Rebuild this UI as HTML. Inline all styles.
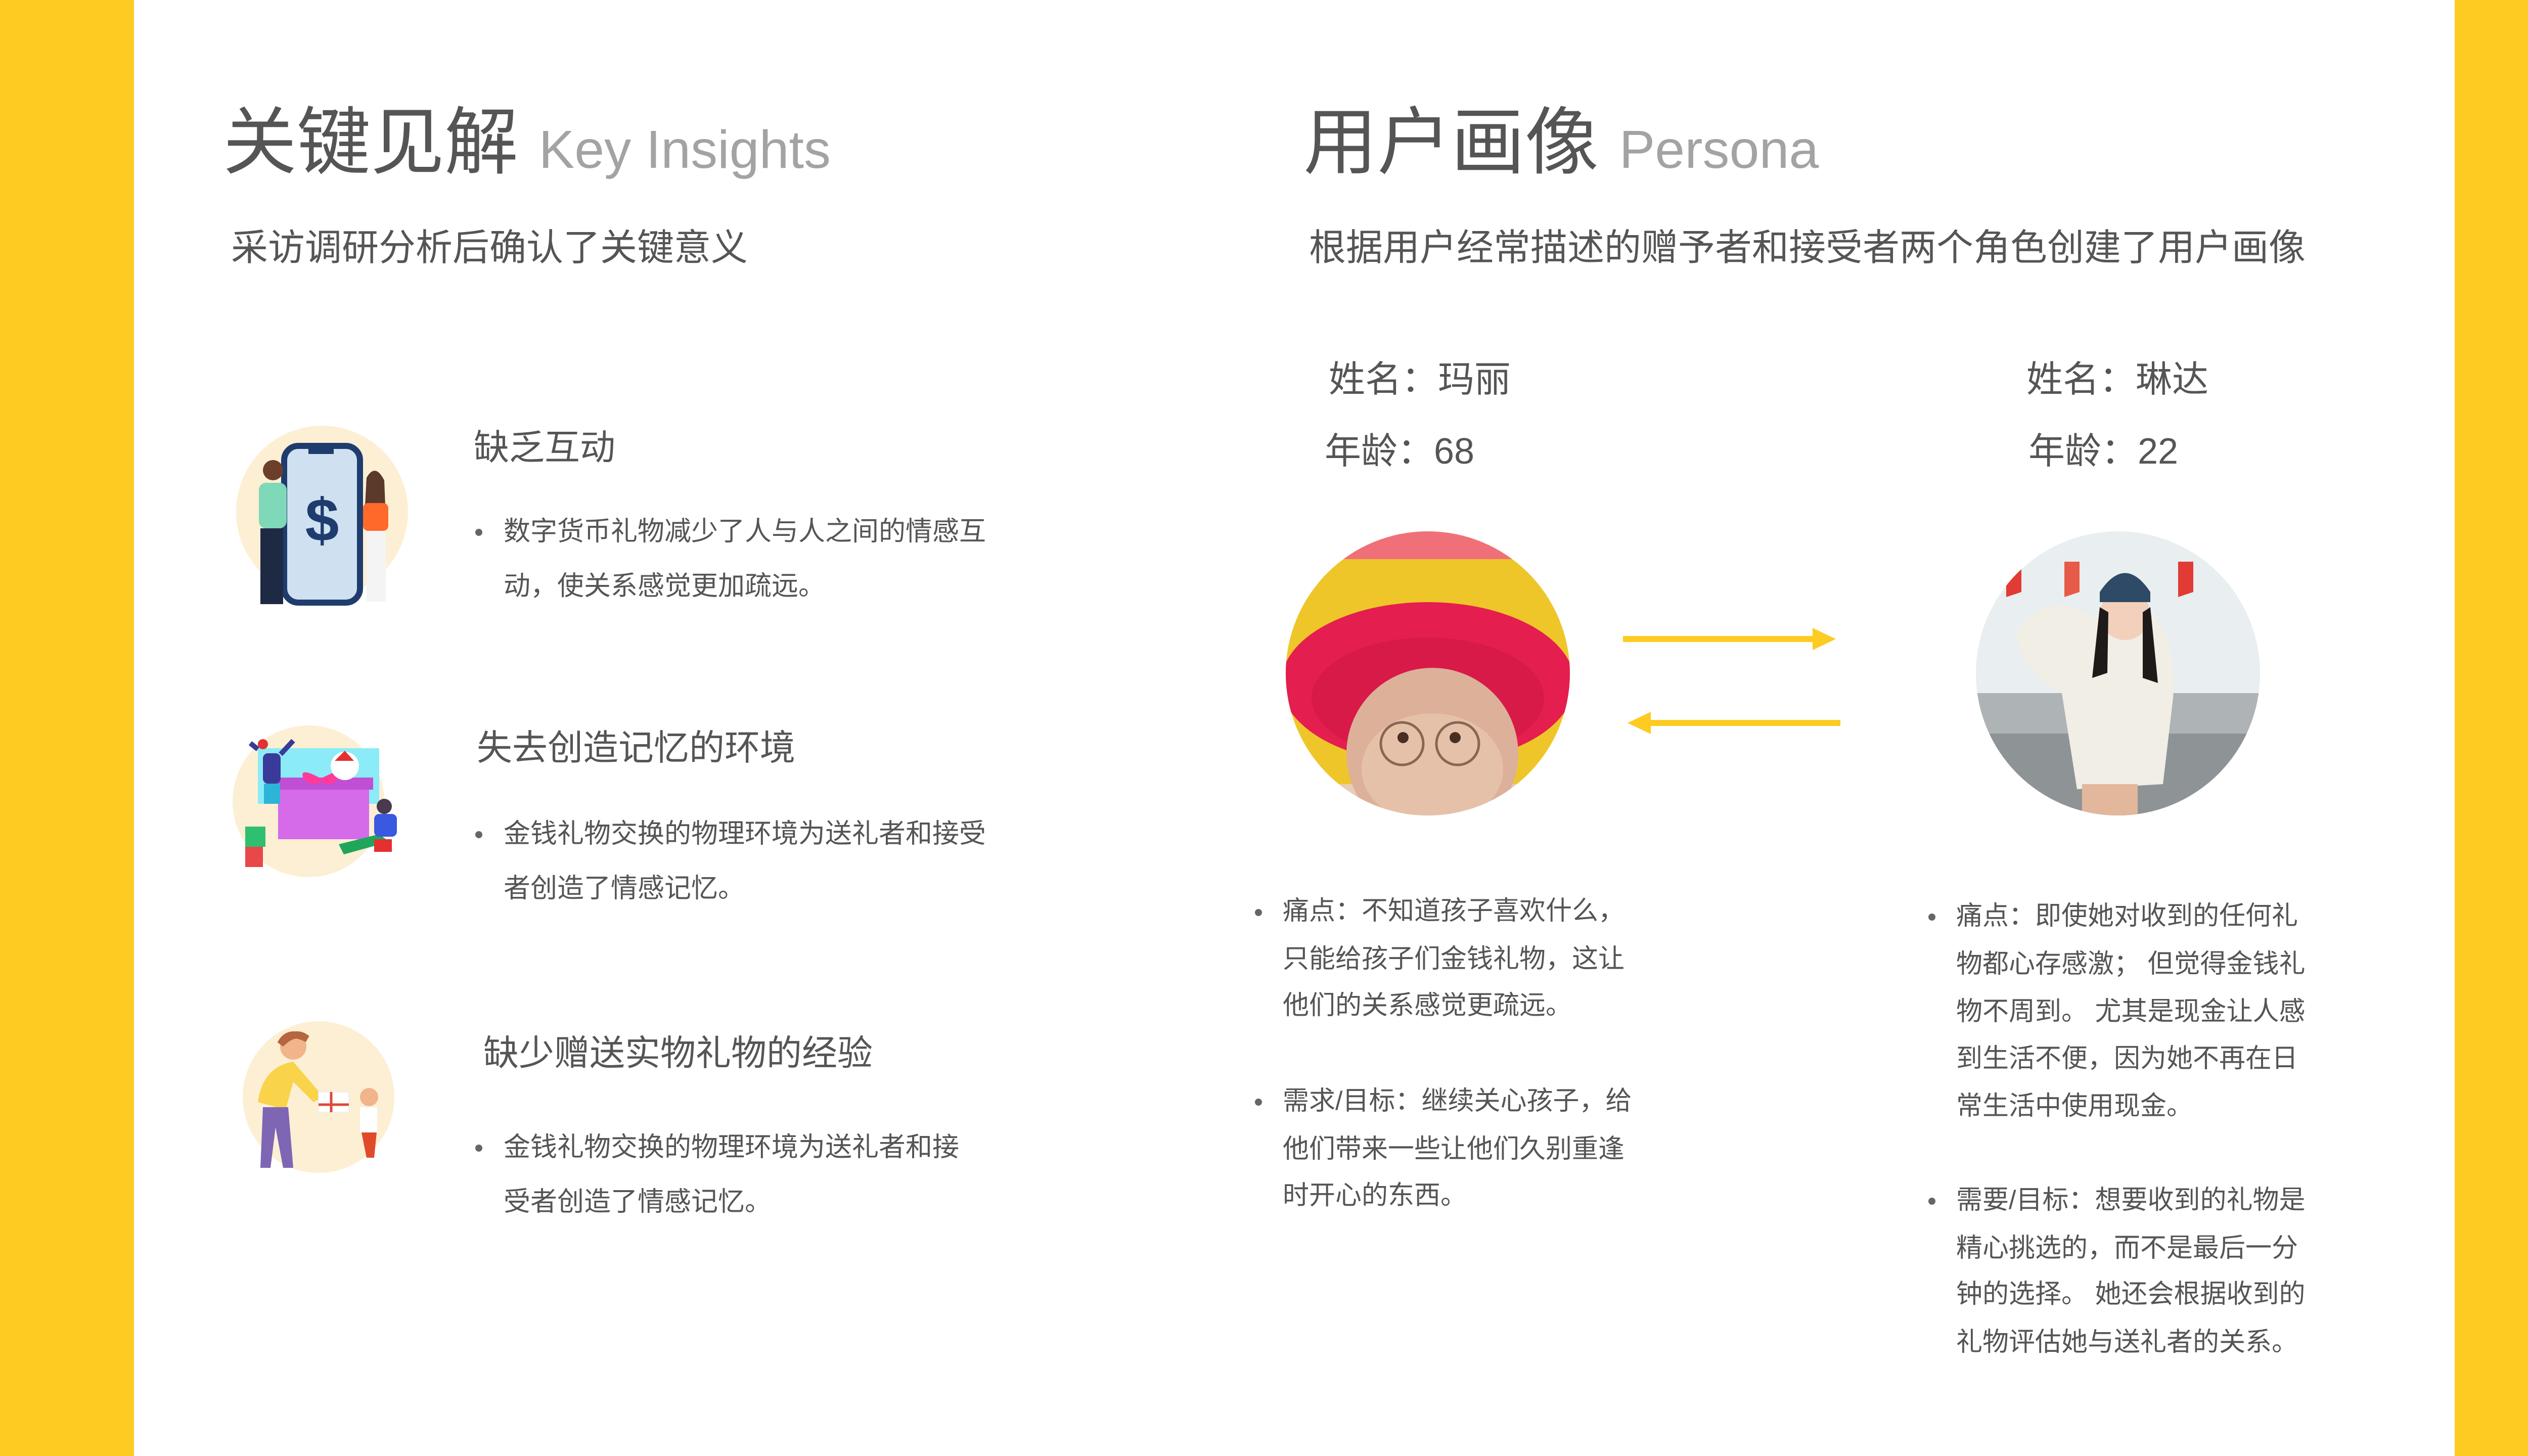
<!DOCTYPE html>
<html><head><meta charset="utf-8">
<style>
html,body{margin:0;padding:0}
body{width:5120px;height:2880px;position:relative;overflow:hidden;background:#fff;font-family:"Liberation Sans","Noto Sans CJK SC",sans-serif;color:#555}
.t{position:absolute;white-space:nowrap;line-height:1;transform:translateY(-50%)}
.b{position:absolute;width:14px;height:14px;border-radius:50%;background:#666;transform:translate(-50%,-50%)}
.bar{position:absolute;top:0;height:2880px;background:#FDCB22}
</style></head><body>
<div class="bar" style="left:0;width:265px"></div>
<div class="bar" style="left:4855px;width:265px"></div>

<div class="t" style="left:441px;top:282px;font-size:146px;color:#555">关键见解 <span style="font-size:106px;color:#a3a3a3">Key Insights</span></div>
<div class="t" style="left:457px;top:490px;font-size:73px">采访调研分析后确认了关键意义</div>

<div class="t" style="left:2578px;top:282px;font-size:146px;color:#555">用户画像 <span style="font-size:106px;color:#a3a3a3">Persona</span></div>
<div class="t" style="left:2589px;top:490px;font-size:73px">根据用户经常描述的赠予者和接受者两个角色创建了用户画像</div>

<!-- insight 1 -->
<svg style="position:absolute;left:450px;top:820px" width="380" height="400" viewBox="0 0 380 400">
<circle cx="187" cy="192" r="170" fill="#FCEFD4"/>
<rect x="112" y="62" width="150" height="310" rx="28" fill="#CFE0F0" stroke="#1F3C6E" stroke-width="12"/>
<rect x="160" y="68" width="50" height="10" fill="#1F3C6E"/>
<text x="187" y="250" font-size="120" font-weight="bold" fill="#1F3C6E" text-anchor="middle" font-family="Liberation Sans">$</text>
<circle cx="90" cy="110" r="20" fill="#6B3F2A"/>
<rect x="62" y="135" width="55" height="90" rx="14" fill="#7FD8B8"/>
<rect x="65" y="225" width="45" height="150" fill="#1E2A44"/>
<circle cx="292" cy="135" r="18" fill="#E9B18A"/>
<path d="M275 125 Q292 95 310 130 L312 180 L272 180Z" fill="#5B3A2B"/>
<rect x="268" y="175" width="50" height="55" rx="10" fill="#FF6A2A"/>
<rect x="275" y="230" width="38" height="140" fill="#F4F4F4"/>
</svg>
<div class="t" style="left:937px;top:885px;font-size:70px">缺乏互动</div>
<div class="b" style="left:947px;top:1053px"></div>
<div class="t" style="left:996px;top:1051px;font-size:53px">数字货币礼物减少了人与人之间的情感互</div>
<div class="t" style="left:996px;top:1159px;font-size:53px">动，使关系感觉更加疏远。</div>

<!-- insight 2 -->
<svg style="position:absolute;left:450px;top:1420px" width="360" height="380" viewBox="0 0 360 380">
<circle cx="160" cy="165" r="150" fill="#FCEFD4"/>
<rect x="60" y="60" width="240" height="110" fill="#8BEBF7"/>
<rect x="100" y="130" width="180" height="110" fill="#D56BE8"/>
<rect x="92" y="118" width="196" height="24" fill="#C04FD6"/>
<path d="M150 120 Q140 95 185 120 Q230 95 220 120 Q200 140 185 125 Q170 140 150 120Z" fill="#FF3A9A"/>
<circle cx="232" cy="95" r="28" fill="#fff"/>
<path d="M212 85 L232 65 L250 85Z" fill="#E53030"/>
<rect x="70" y="70" width="35" height="60" rx="10" fill="#3A3A9A"/>
<rect x="72" y="130" width="32" height="40" fill="#2DB5D8"/>
<path d="M60 62 L45 50 M105 72 L130 45" stroke="#3A3A9A" stroke-width="10"/>
<circle cx="70" cy="52" r="10" fill="#E53030"/>
<rect x="35" y="215" width="40" height="40" fill="#2FBF70"/>
<rect x="35" y="255" width="35" height="40" fill="#E84848"/>
<path d="M220 250 L300 230 L320 245 L230 270Z" fill="#1FA65A"/>
<rect x="290" y="190" width="45" height="45" rx="10" fill="#3B58E0"/>
<circle cx="310" cy="175" r="15" fill="#4A3A50"/>
<rect x="290" y="240" width="35" height="25" fill="#E53030"/>
</svg>
<div class="t" style="left:943px;top:1479px;font-size:70px">失去创造记忆的环境</div>
<div class="b" style="left:947px;top:1651px"></div>
<div class="t" style="left:996px;top:1649px;font-size:53px">金钱礼物交换的物理环境为送礼者和接受</div>
<div class="t" style="left:996px;top:1757px;font-size:53px">者创造了情感记忆。</div>

<!-- insight 3 -->
<svg style="position:absolute;left:460px;top:1990px" width="340" height="370" viewBox="0 0 340 370">
<circle cx="170" cy="180" r="150" fill="#FCEFD4"/>
<circle cx="120" cy="80" r="26" fill="#F2B48A"/>
<path d="M95 75 Q110 45 148 65 L140 60 Q120 50 95 75Z" fill="#B5653F" stroke="#B5653F" stroke-width="14"/>
<path d="M50 190 Q60 120 120 110 L180 180 L160 190 L120 150 L105 205 Z" fill="#F9D34A"/>
<path d="M60 200 L110 200 L120 320 L100 320 L85 240 L75 320 L55 320Z" fill="#7E66B5"/>
<rect x="170" y="170" width="60" height="40" fill="#fff" stroke="#eee" stroke-width="2"/>
<path d="M170 195 L230 195 M195 170 L195 210" stroke="#E0473A" stroke-width="5"/>
<circle cx="270" cy="180" r="18" fill="#F2B48A"/>
<rect x="252" y="200" width="34" height="50" fill="#fff"/>
<path d="M255 250 L285 250 L280 300 L265 300Z" fill="#E04A2A"/>
</svg>
<div class="t" style="left:956px;top:2083px;font-size:70px">缺少赠送实物礼物的经验</div>
<div class="b" style="left:947px;top:2271px"></div>
<div class="t" style="left:996px;top:2269px;font-size:53px">金钱礼物交换的物理环境为送礼者和接</div>
<div class="t" style="left:996px;top:2377px;font-size:53px">受者创造了情感记忆。</div>

<!-- persona -->
<div class="t" style="left:2628px;top:751px;font-size:72px">姓名：玛丽</div>
<div class="t" style="left:2620px;top:893px;font-size:72px">年龄：68</div>
<div class="t" style="left:4008px;top:751px;font-size:72px">姓名：琳达</div>
<div class="t" style="left:4012px;top:893px;font-size:72px">年龄：22</div>

<svg style="position:absolute;left:2543px;top:1051px" width="562" height="562" viewBox="0 0 562 562">
<defs><clipPath id="c1"><circle cx="281" cy="281" r="281"/></clipPath></defs>
<g clip-path="url(#c1)">
<rect width="562" height="562" fill="#EFC62A"/>
<rect width="562" height="55" fill="#F0707A"/>
<ellipse cx="281" cy="300" rx="290" ry="160" fill="#E41E4E"/>
<ellipse cx="281" cy="330" rx="230" ry="120" fill="#D81A48"/>
<rect x="0" y="500" width="562" height="62" fill="#E9CDB8"/>
<ellipse cx="290" cy="440" rx="170" ry="170" fill="#DDB09A"/>
<ellipse cx="290" cy="470" rx="140" ry="110" fill="#E6C1AA"/>
<circle cx="230" cy="420" r="42" fill="none" stroke="#8A6550" stroke-width="5"/>
<circle cx="340" cy="420" r="42" fill="none" stroke="#8A6550" stroke-width="5"/>
<circle cx="232" cy="408" r="11" fill="#4A2E22"/>
<circle cx="335" cy="408" r="11" fill="#4A2E22"/>
</g></svg>

<svg style="position:absolute;left:3908px;top:1051px" width="562" height="562" viewBox="0 0 562 562">
<defs><clipPath id="c2"><circle cx="281" cy="281" r="281"/></clipPath></defs>
<g clip-path="url(#c2)">
<rect width="562" height="562" fill="#E9EEF0"/>
<rect y="320" width="562" height="242" fill="#AEB3B5"/>
<rect y="400" width="562" height="162" fill="#8E9496"/>
<path d="M60 60 l30 0 0 60 -30 10z" fill="#E23A34"/>
<path d="M175 60 l30 0 0 60 -30 10z" fill="#E85A48"/>
<path d="M400 60 l30 0 0 60 -30 10z" fill="#E23A34"/>
<path d="M80 200 Q140 110 230 170 L330 140 Q400 200 390 330 L370 500 L200 510 L170 320 Q90 280 80 200Z" fill="#F1EEE6"/>
<circle cx="295" cy="165" r="50" fill="#F2D0BC"/>
<path d="M245 120 Q295 45 345 120 L345 140 L245 140Z" fill="#2F4A66"/>
<path d="M245 150 L230 290 L260 280 L262 160Z M345 150 L360 300 L330 290 L330 160Z" fill="#1E1A1A"/>
<rect x="210" y="500" width="110" height="62" fill="#E2B79C"/>
</g></svg>

<svg style="position:absolute;left:3205px;top:1230px" width="440" height="240" viewBox="0 0 440 240">
<rect x="5" y="28" width="390" height="12" fill="#FDCB22"/>
<path d="M380 12 L426 34 L380 56Z" fill="#FDCB22"/>
<rect x="45" y="194" width="390" height="12" fill="#FDCB22"/>
<path d="M60 178 L14 200 L60 222Z" fill="#FDCB22"/>
</svg>

<div class="b" style="left:2489px;top:1805px"></div>
<div class="t" style="left:2537px;top:1802px;font-size:52px">痛点：不知道孩子喜欢什么，</div>
<div class="t" style="left:2537px;top:1897px;font-size:52px">只能给孩子们金钱礼物，这让</div>
<div class="t" style="left:2537px;top:1989px;font-size:52px">他们的关系感觉更疏远。</div>
<div class="b" style="left:2489px;top:2180px"></div>
<div class="t" style="left:2537px;top:2178px;font-size:52px">需求/目标：继续关心孩子，给</div>
<div class="t" style="left:2537px;top:2273px;font-size:52px">他们带来一些让他们久别重逢</div>
<div class="t" style="left:2537px;top:2365px;font-size:52px">时开心的东西。</div>

<div class="b" style="left:3821px;top:1814px"></div>
<div class="t" style="left:3869px;top:1812px;font-size:52px">痛点：即使她对收到的任何礼</div>
<div class="t" style="left:3869px;top:1907px;font-size:52px">物都心存感激； 但觉得金钱礼</div>
<div class="t" style="left:3869px;top:2001px;font-size:52px">物不周到。 尤其是现金让人感</div>
<div class="t" style="left:3869px;top:2094px;font-size:52px">到生活不便，因为她不再在日</div>
<div class="t" style="left:3869px;top:2188px;font-size:52px">常生活中使用现金。</div>
<div class="b" style="left:3821px;top:2376px"></div>
<div class="t" style="left:3869px;top:2374px;font-size:52px">需要/目标：想要收到的礼物是</div>
<div class="t" style="left:3869px;top:2469px;font-size:52px">精心挑选的，而不是最后一分</div>
<div class="t" style="left:3869px;top:2560px;font-size:52px">钟的选择。 她还会根据收到的</div>
<div class="t" style="left:3869px;top:2655px;font-size:52px">礼物评估她与送礼者的关系。</div>
</body></html>
